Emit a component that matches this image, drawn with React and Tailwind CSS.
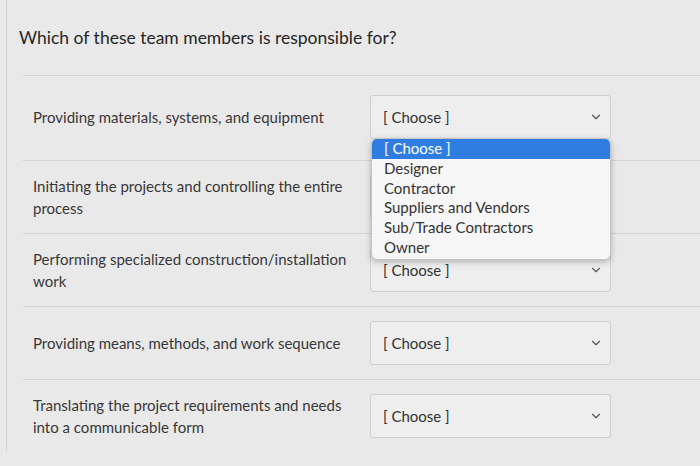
import React from 'react';
import { ChevronDown } from 'lucide-react';

const rows = [
  "Providing materials, systems, and equipment",
  "Initiating the projects and controlling the entire process",
  "Performing specialized construction/installation work",
  "Providing means, methods, and work sequence",
  "Translating the project requirements and needs into a communicable form",
];

const options = ["[ Choose ]", "Designer", "Contractor", "Suppliers and Vendors", "Sub/Trade Contractors", "Owner"];

const Select = ({ open }) => (
  <div className="relative w-[241px]">
    <div className="flex h-[44px] items-center justify-between rounded-[3px] border border-[#cfcfcf] bg-[#eeeeee] pl-[12px] pr-[7px] text-[15px] text-[#333]">
      <span>[ Choose ]</span>
      <ChevronDown size={14} strokeWidth={2} className="text-[#555]" />
    </div>
    {open && (
      <div className="absolute left-[1px] top-[43px] z-10 w-[240px] overflow-hidden rounded-[6px] border border-[#c4c4c4] bg-[#f6f6f6] pb-[1px] shadow-[0_2px_6px_rgba(0,0,0,0.25)]">
        {options.map((o, i) => (
          <div
            key={o}
            className={
              "h-[19.8px] pl-[12px] text-[15px] leading-[19.8px] " +
              (i === 0 ? "bg-[#2f7de1] text-white" : "text-[#333]")
            }
          >
            {o}
          </div>
        ))}
      </div>
    )}
  </div>
);

export default function App() {
  return (
    <div className="min-h-[466px] w-[700px] overflow-hidden bg-[#e9e9e9] font-['Lato','Liberation_Sans',sans-serif]">
      <div className="ml-[6px] border-l border-[#d4d4d4] pl-[12px] pt-[24px]">
        <h1 className="text-[17.5px] leading-[27px] text-[#262626]">Which of these team members is responsible for?</h1>
      </div>
      <div className="ml-[6px] border-l border-[#d4d4d4] pl-[16px] pt-[24px]">
        {rows.map((r, i) => (
          <div
            key={r}
            className={
              "flex items-center gap-[17px] border-t border-[#d3d3d3] pl-[10px] " +
              (i === 0 ? "pb-[21px] pt-[19px]" : "py-[14px]")
            }
          >
            <div className="w-[320px] text-[15px] leading-[22px] text-[#383838]">{r}</div>
            <Select open={i === 0} />
          </div>
        ))}
      </div>
    </div>
  );
}
